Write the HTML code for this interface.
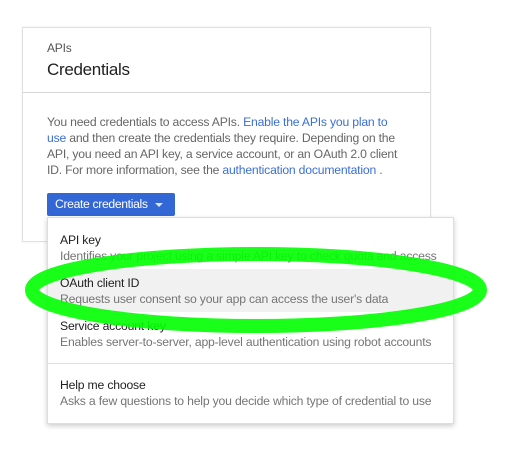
<!DOCTYPE html>
<html><head><style>
body{margin:0;width:527px;height:453px;background:#fff;font-family:"Liberation Sans",Roboto,sans-serif;position:relative;overflow:hidden}
.card{position:absolute;left:22px;top:27px;width:407px;height:213px;border:1px solid #e0e0e0;box-shadow:0 0 2px rgba(0,0,0,.08);background:#fff}
.hd{position:absolute;left:0;right:0;top:0;height:64px;border-bottom:1px solid #d6d6d6}
.t1{position:absolute;left:24px;top:13px;font-size:12px;color:#555;letter-spacing:-0.2px}
.t2{position:absolute;left:24px;top:32px;font-size:17px;color:#212121;letter-spacing:-0.3px}
.p{position:absolute;left:24px;top:86px;width:360px;font-size:12.2px;line-height:16px;color:#666;letter-spacing:-0.2px}
.p a{color:#3b6fd4;text-decoration:none}
.btn{position:absolute;left:47px;top:193px;width:128px;height:23px;background:#3367d6;border-radius:2px;color:#fff;font-size:12.2px;line-height:23px;box-sizing:border-box;padding-left:8px;letter-spacing:-0.35px}
.btn i{position:absolute;right:12px;top:10px;border-left:4px solid transparent;border-right:4px solid transparent;border-top:4px solid #dfe6f7}
.menu{position:absolute;left:47px;top:217px;width:405px;height:205px;background:#fff;border:1px solid #ddd;box-shadow:0 2px 5px rgba(0,0,0,.2)}
.it{position:absolute;left:0;right:0;height:43px;padding-left:12px;box-sizing:border-box;letter-spacing:-0.18px;white-space:nowrap}
.it b{display:block;font-weight:normal;font-size:12.2px;color:#212121;padding-top:6px;line-height:16px}
.it span{display:block;font-size:12.2px;color:#757575;line-height:17px}
.sep{position:absolute;left:0;right:0;top:145px;border-top:1px solid #e0e0e0}
</style></head><body>
<div class="card">
<div class="hd"><div class="t1">APIs</div><div class="t2">Credentials</div></div>
<div class="p">You need credentials to access APIs. <a>Enable the APIs you plan to use</a> and then create the credentials they require. Depending on the API, you need an API key, a service account, or an OAuth 2.0 client ID. For more information, see the <a>authentication documentation</a> .</div>
</div>
<div class="btn">Create credentials<i></i></div>
<div class="menu">
<div class="it" style="top:8px"><b>API key</b><span>Identifies your project using a simple API key to check quota and access</span></div>
<div class="it" style="top:51px;background:#f1f1f1"><b>OAuth client ID</b><span>Requests user consent so your app can access the user's data</span></div>
<div class="it" style="top:94px"><b>Service account key</b><span>Enables server-to-server, app-level authentication using robot accounts</span></div>
<div class="sep"></div>
<div class="it" style="top:153px"><b>Help me choose</b><span>Asks a few questions to help you decide which type of credential to use</span></div>
</div>
<svg width="527" height="453" style="position:absolute;left:0;top:0">
<ellipse cx="256" cy="290" rx="224" ry="36" fill="none" stroke="#00ff00" stroke-width="14" opacity="0.9"/>
</svg>
</body></html>
